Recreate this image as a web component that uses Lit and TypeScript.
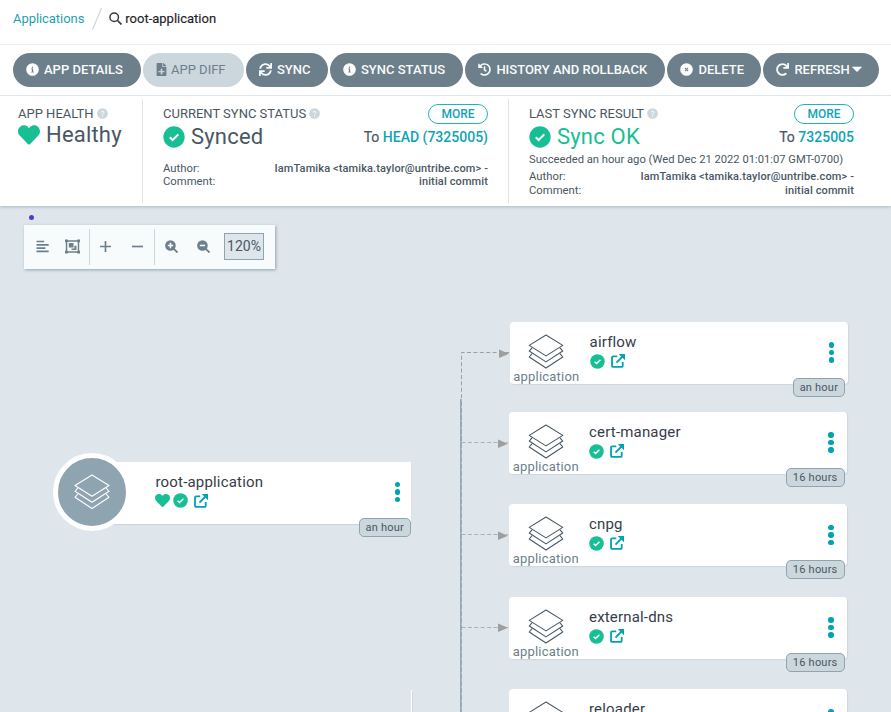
import { LitElement, html, css, svg, nothing } from "lit";
import { customElement, property } from "lit/decorators.js";
import { styleMap } from "lit/directives/style-map.js";

const circle = (fill = "currentColor") => svg`<circle cx="256" cy="256" r="248" fill=${fill}/>`;

const ICONS: Record<string, unknown> = {
  info: svg`${circle("#fff")}<g fill="#6d7f8b"><circle cx="254" cy="165" r="28"/><path d="M208 220h74v120h26v34H204v-34h28v-84h-24z"/></g>`,
  times: svg`${circle("#fff")}<path d="M192 192L320 320M320 192L192 320" stroke="#6d7f8b" stroke-width="44"/>`,
  check: svg`${circle("#18be94")}<path d="M158 262l66 64 132-132" fill="none" stroke="#fff" stroke-width="46"/>`,
  help: svg`${circle("#ccd6dd")}<path d="M190 210c0-90 136-84 132-6 0 50-64 48-64 96" fill="none" stroke="#fff" stroke-width="46"/><circle cx="258" cy="368" r="32" fill="#fff"/>`,
  heart: svg`<path fill="#18be94" d="M462.3 62.6C407.5 15.9 326 24.3 275.7 76.2L256 96.5l-19.7-20.3C186.1 24.3 104.5 15.9 49.7 62.6c-62.8 53.6-66.1 149.8-9.9 207.9l193.5 199.8c12.5 12.9 32.8 12.9 45.3 0l193.5-199.8c56.3-58.1 53-154.3-9.8-207.9z"/>`,
  diff: svg`<path fill="currentColor" d="M288 136V0H88C75 0 64 11 64 24v464c0 13 11 24 24 24h336c13 0 24-11 24-24V160H312c-13 0-24-11-24-24zm76 180c7 0 12 5 12 12v28c0 7-5 12-12 12h-76v76c0 7-5 12-12 12h-40c-7 0-12-5-12-12v-76h-76c-7 0-12-5-12-12v-28c0-7 5-12 12-12h76v-76c0-7 5-12 12-12h40c7 0 12 5 12 12v76zM441 105L343 7c-4-4-11-7-17-7h-6v128h128v-6c0-6-2-12-7-17z"/>`,
  sync: svg`<path fill="currentColor" d="M440.65 12.57l4 82.77A247.16 247.16 0 0 0 255.83 8C134.73 8 33.91 94.92 12.29 209.82A12 12 0 0 0 24.09 224h49.05a12 12 0 0 0 11.67-9.26 175.91 175.91 0 0 1 317-56.94l-101.46-4.86a12 12 0 0 0-12.57 12v47.41a12 12 0 0 0 12 12H500a12 12 0 0 0 12-12V12a12 12 0 0 0-12-12h-47.37a12 12 0 0 0-11.98 12.57zM255.83 432a175.61 175.61 0 0 1-146-77.8l101.8 4.87a12 12 0 0 0 12.57-12v-47.4a12 12 0 0 0-12-12H12a12 12 0 0 0-12 12V500a12 12 0 0 0 12 12h47.35a12 12 0 0 0 12-12.6l-4.15-82.57A247.17 247.17 0 0 0 255.83 504c121.11 0 221.93-86.92 243.55-201.82a12 12 0 0 0-11.8-14.18h-49.05a12 12 0 0 0-11.67 9.26A175.86 175.86 0 0 1 255.83 432z"/>`,
  redo: svg`<path fill="currentColor" d="M500.33 0h-47.41a12 12 0 0 0-12 12.57l4 82.76A247.42 247.42 0 0 0 256 8C119.34 8 7.9 119.53 8 256.19 8.1 393.07 119.1 504 256 504a247.1 247.1 0 0 0 166.18-63.91 12 12 0 0 0 .48-17.43l-34-34a12 12 0 0 0-16.38-.55A176 176 0 1 1 402.1 157.8l-101.53-4.87a12 12 0 0 0-12.57 12v47.41a12 12 0 0 0 12 12h200.33a12 12 0 0 0 12-12V12a12 12 0 0 0-12-12z"/>`,
  history: svg`<path fill="currentColor" d="M504 255.531c.253 136.64-111.18 248.372-247.82 248.468-59.015.042-113.223-20.53-155.822-54.911-11.077-8.94-11.905-25.541-1.839-35.607l11.267-11.267c8.609-8.609 22.353-9.551 31.891-1.984C173.062 425.135 212.781 440 256 440c101.705 0 184-82.311 184-184 0-101.705-82.311-184-184-184-48.814 0-93.149 18.969-126.068 49.932l50.754 50.754c10.08 10.08 2.941 27.314-11.313 27.314H24c-8.837 0-16-7.163-16-16V38.627c0-14.254 17.234-21.393 27.314-11.314l49.372 49.372C129.209 34.136 189.552 8 256 8c136.81 0 247.747 110.78 248 247.531zm-180.912 78.784l9.823-12.63c8.138-10.463 6.253-25.542-4.21-33.679L288 256.349V152c0-13.255-10.745-24-24-24h-16c-13.255 0-24 10.745-24 24v135.651l65.409 50.874c10.463 8.137 25.541 6.253 33.679-4.21z"/>`,
  search: svg`<g fill="none" stroke="currentColor" stroke-width="58"><circle cx="205" cy="205" r="168"/><path d="M325 325L490 490" stroke-width="68"/></g>`,
  caret: svg`<path fill="currentColor" d="M16 150h480L256 400z" stroke="currentColor" stroke-width="26" stroke-linejoin="round"/>`,
  external: svg`<path d="M230 84H76q-38 0-38 38v314q0 38 38 38h314q38 0 38-38V290" fill="none" stroke="#00a2b3" stroke-width="66"/><path d="M200 312L430 82" stroke="#00a2b3" stroke-width="66"/><path d="M280 0h232v232z" fill="#00a2b3"/>`,
  lines: svg`<path d="M20 60h300M20 190h480M20 320h350M20 450h480" stroke="currentColor" stroke-width="66"/>`,
  group: svg`<g fill="none" stroke="currentColor" stroke-width="50"><path d="M52 70h408v372H52z"/></g><path fill="currentColor" d="M0 18h96v96H0zM416 18h96v96h-96zM0 398h96v96H0zM416 398h96v96h-96zM130 140h160v150H130zM320 230h70v146H222v-56h98z"/>`,
  plus: svg`<path d="M256 40v432M40 256h432" stroke="currentColor" stroke-width="66"/>`,
  minus: svg`<path d="M40 256h432" stroke="currentColor" stroke-width="66"/>`,
  zoomin: svg`<path d="M310 310L495 495" stroke="currentColor" stroke-width="72"/><circle cx="215" cy="215" r="208" fill="currentColor"/><path d="M215 110v210M110 215h210" stroke="#f8fbfc" stroke-width="62"/>`,
  zoomout: svg`<path d="M310 310L495 495" stroke="currentColor" stroke-width="72"/><circle cx="215" cy="215" r="208" fill="currentColor"/><path d="M110 215h210" stroke="#f8fbfc" stroke-width="62"/>`,
};

const icon = (name: string, size: number) =>
  html`<svg class="icon" width=${size} height=${size} viewBox="0 0 512 512">${ICONS[name]}</svg>`;

const layers = (cls: string) => html`
  <svg class=${cls} width="36" height="36" viewBox="0 0 36 36" fill="none" stroke="currentColor" stroke-width="1.1" stroke-linejoin="round">
    <path d="M18 1L35 11.500 18 22.200 1 11.500z"/>
    <path d="M3.800 14L1 17.300 18 28.300 35 17.300 32.200 14"/>
    <path d="M3.800 20L1 23.300 18 34.500 35 23.300 32.200 20"/>
  </svg>`;

@customElement("resource-node")
export class ResourceNode extends LitElement {
  @property() name = "";
  @property() age = "";
  @property({ type: Boolean, reflect: true }) root = false;

  static styles = css`
    :host { position: absolute; display: block; width: 338px; height: 62px; background: #fff; border-radius: 4px; box-shadow: 1px 1px 1px #ccd6dd; }
    :host([root]) { width: 320px; border-radius: 0; box-shadow: 0 1px 1px #ccd6dd; }
    .body { display: grid; grid-template-columns: 80px 1fr 12px; grid-template-rows: 62px; height: 62px; padding-right: 10px; box-sizing: border-box; }
    :host([root]) .body { grid-template-columns: 64.5px 1fr 12px; padding-right: 7.5px; }
    .icon { display: block; }
    .kind { display: flex; flex-direction: column; align-items: center; width: 73.5px; padding-top: 11.5px; box-sizing: border-box; font-size: 13px; line-height: 15px; letter-spacing: .2px; color: #6d7f8b; }
    .layers { color: #495763; }
    .disc { margin: -9px 0 0 -38.5px; width: 68px; height: 68px; border: 5px solid #fff; border-radius: 50%; background: #8fa4b1; color: #fff; display: flex; align-items: center; justify-content: center; }
    .name { padding-top: 11px; font-size: 15px; line-height: 18px; letter-spacing: .18px; color: #363c4a; }
    .badges { display: flex; align-items: center; gap: 6px; margin-top: 2px; height: 16px; }
    .badges .pair { display: flex; gap: 3px; }
    :host([root]) .pair { margin-left: -.5px; }
    .menu { display: flex; flex-direction: column; align-items: center; justify-content: center; gap: 2px; padding-bottom: 1px; }
    .menu i { width: 5.6px; height: 5.6px; border-radius: 50%; background: #00a2b3; }
    .age { position: absolute; right: 2.5px; bottom: -13px; height: 19px; padding: 0 6px; box-sizing: border-box; border: 1px solid #8fa4b1; border-radius: 5px; background: #ccd6dd; color: #495763; font-size: 11px; line-height: 17px; letter-spacing: .22px; white-space: nowrap; }
    :host([root]) .age { right: 0; }
  `;

  render() {
    return html`
      <div class="body">
        ${this.root
          ? html`<div class="disc">${layers("glyph")}</div>`
          : html`<div class="kind">${layers("layers")}<span>application</span></div>`}
        <div class="text">
          <div class="name">${this.name}</div>
          <div class="badges">
            <span class="pair">${this.root ? icon("heart", 15) : nothing}${icon("check", 15)}</span>${icon("external", 14)}
          </div>
        </div>
        <div class="menu"><i></i><i></i><i></i></div>
      </div>
      ${this.age ? html`<span class="age">${this.age}</span>` : nothing}
    `;
  }
}

const BUTTONS = [
  { icon: "info", label: "APP DETAILS", w: 128 },
  { icon: "diff", label: "APP DIFF", w: 101, off: true },
  { icon: "sync", label: "SYNC", w: 82 },
  { icon: "info", label: "SYNC STATUS", w: 133.4 },
  { icon: "history", label: "HISTORY AND ROLLBACK", w: 200 },
  { icon: "times", label: "DELETE", w: 94 },
  { icon: "redo", label: "REFRESH", w: 116, caret: true },
];

const NODES = [
  { name: "airflow", age: "an hour", x: 509.6, y: 322 },
  { name: "cert-manager", age: "16 hours", x: 509, y: 412 },
  { name: "cnpg", age: "16 hours", x: 509, y: 504.4 },
  { name: "external-dns", age: "16 hours", x: 509, y: 597 },
  { name: "reloader", age: "", x: 509, y: 689 },
];

const CANVAS_TOP = 206;

@customElement("app-root")
export class AppRoot extends LitElement {
  static styles = css`
    :host { display: flex; flex-direction: column; width: 891px; height: 712px; overflow: hidden; background: #fff; font-family: Roboto, sans-serif; color: #495763; }
    .icon { display: block; flex: none; }
    .crumbs { display: flex; align-items: center; height: 44px; padding: 0 13px 8px; box-sizing: border-box; font-size: 13px; color: #363c4a; }
    .crumbs a { color: #1f9fb4; letter-spacing: -.06px; }
    .slash { margin: 0 6.5px; }
    .crumbs b { font-weight: 400; color: #1d222b; margin-left: 3px; -webkit-text-stroke: .15px; }
    .actions { display: flex; gap: 2px; height: 52px; padding: 8px 12px 8px 13px; box-sizing: border-box; border-top: 1px solid #eaeff3; border-bottom: 1px solid #e8edf1; }
    .btn { display: flex; flex: none; align-items: center; height: 34px; padding: 0 0 2px 13px; box-sizing: border-box; border-radius: 17px; background: #6d7f8b; color: #f8fbfc; font-size: 13px; font-weight: 500; white-space: nowrap; }
    .btn span { margin-left: 5px; }
    .btn span + .icon { margin-left: 2px; }
    .btn.off { background: #ccd6dd; color: #6d7f8b; font-weight: 400; }
    .btn.off .icon { margin-left: -1px; }
    .btn.off span { margin-left: 3px; }
    .status { position: relative; z-index: 1; display: flex; height: 110px; padding: 3px 0; box-sizing: border-box; background: #fff; box-shadow: 0 1px 3px #aab7c0; }
    .col { position: relative; width: 366px; padding: 8px 20px 0; box-sizing: border-box; border-right: 1px solid #dee6eb; }
    .col.health { width: 143px; padding-left: 18px; }
    .col.last { border-color: transparent; }
    .row { display: flex; align-items: center; justify-content: space-between; height: 14px; }
    .title { display: flex; align-items: center; gap: 3px; font-size: 13px; line-height: 14px; white-space: nowrap; }
    .title .icon { margin-bottom: 1px; }
    .more { height: 20px; width: 60px; box-sizing: border-box; border: 1px solid #1fb2c4; border-radius: 10px; color: #0fa3b5; font-size: 12px; font-weight: 500; line-height: 18px; text-align: center; }
    .big { display: flex; align-items: center; gap: 6px; font-size: 22px; line-height: 26px; letter-spacing: .2px; white-space: nowrap; }
    .health .big { margin-top: 1px; }
    .result { display: flex; align-items: flex-start; justify-content: space-between; margin-top: 3px; height: 26px; }
    .ok { color: #18be94; }
    .rev { font-size: 14px; line-height: 26px; white-space: nowrap; -webkit-text-stroke: .2px; }
    .rev b { font-weight: 500; color: #0fa3b5; -webkit-text-stroke: 0; }
    .when { margin-top: 2px; height: 16px; font-size: 11.2px; line-height: 16px; white-space: nowrap; }
    .meta { display: grid; grid-template-columns: 80px 1fr; font-size: 11.3px; line-height: 13px; }
    .meta p { margin: 0; text-align: right; font-size: 11px; font-weight: 500; letter-spacing: .12px; white-space: nowrap; justify-self: end; }
    .col:not(.last) .meta { margin-top: 12px; }
    .last .meta { line-height: 14px; margin-top: 2px; }
    .canvas { position: relative; flex: 1; background: #dee6eb; overflow: hidden; }
    .edges { position: absolute; inset: 0; }
    .dot { position: absolute; left: 29px; top: 9px; width: 5px; height: 5px; border-radius: 50%; background: #463fd6; }
    .tools { position: absolute; left: 24px; top: 19px; width: 251px; height: 44px; padding: 4px 11px 4px 0; box-sizing: border-box; display: flex; background: #f8fbfc; box-shadow: 1px 1px 3px #8fa4b1; color: #6d7f8b; }
    .tools .icon { margin-bottom: 2px; }
    .grp { display: flex; align-items: center; box-sizing: border-box; border-right: 1px solid #ccd6dd; }
    .a { width: 66px; padding-left: 12px; gap: 16px; }
    .b { width: 65px; padding-left: 9px; gap: 19px; }
    .c { flex: 1; padding-left: 10px; gap: 19px; border: 0; }
    .pct { margin: 0 0 1px -5px; width: 40px; height: 27px; box-sizing: border-box; border: 1px solid #8fa4b1; background: #dee6eb; color: #495763; font-size: 14px; line-height: 25px; text-align: center; }
    .sliver { position: absolute; left: 411px; top: 484px; width: 1px; height: 30px; background: #fff; box-shadow: 1px 1px 1px #ccd6dd; }
  `;

  private author() {
    return html`<div class="meta">
      <span>Author:</span><p>IamTamika &lt;tamika.taylor@untribe.com&gt; -</p>
      <span>Comment:</span><p>initial commit</p>
    </div>`;
  }

  render() {
    return html`
      <nav class="crumbs">
        <a>Applications</a>
        <svg class="slash" width="12" height="24" viewBox="0 0 12 24"><path d="M1.500 23.500L10.500 2" stroke="#ccd6dd" stroke-width="1.200"/></svg>
        ${icon("search", 13)}<b>root-application</b>
      </nav>
      <div class="actions">
        ${BUTTONS.map(
          (b) => html`<div class="btn ${b.off ? "off" : ""}" style=${styleMap({ width: `${b.w}px` })}>
            ${icon(b.icon, 13)}<span>${b.label}</span>${b.caret ? icon("caret", 10) : nothing}
          </div>`
        )}
      </div>
      <section class="status">
        <div class="col health">
          <div class="row"><span class="title">APP HEALTH ${icon("help", 11)}</span></div>
          <div class="big">${icon("heart", 22)}<span>Healthy</span></div>
        </div>
        <div class="col">
          <div class="row"><span class="title">CURRENT SYNC STATUS ${icon("help", 11)}</span><span class="more">MORE</span></div>
          <div class="result"><div class="big">${icon("check", 22)}<span>Synced</span></div><span class="rev">To <b>HEAD (7325005)</b></span></div>
          ${this.author()}
        </div>
        <div class="col last">
          <div class="row"><span class="title">LAST SYNC RESULT ${icon("help", 11)}</span><span class="more">MORE</span></div>
          <div class="result"><div class="big ok">${icon("check", 22)}<span>Sync OK</span></div><span class="rev">To <b>7325005</b></span></div>
          <div class="when">Succeeded an hour ago (Wed Dec 21 2022 01:01:07 GMT-0700)</div>
          ${this.author()}
        </div>
      </section>
      <main class="canvas">
        <svg class="edges" width="891" height="506" viewBox="0 206 891 506">
          <g fill="none" stroke="#8fa4b1" stroke-dasharray="4 2.400">
            <path d="M461.500 443V352.500H509"/>
            <path d="M461.500 442.500H508M461.500 534.500H508M461.500 627.500H508" stroke="#a3b4bf"/>
          </g>
          <path d="M461 399V713" stroke="#8fa4b1" stroke-width="1.800"/>
          <path d="M461.500 399V713" stroke="#b5c2cc" stroke-width="1" stroke-dasharray="2 5"/>
          <path fill="#9e9e9e" d="M499 349.500l10 4.300-10 4.200zM498 439.500l10 4.300-10 4.200zM498 531.500l10 4.300-10 4.200zM498 623.500l10 4.300-10 4.200z"/>
        </svg>
        <i class="dot"></i>
        <div class="tools">
          <div class="grp a">${icon("lines", 13)}${icon("group", 15)}</div>
          <div class="grp b">${icon("plus", 13)}${icon("minus", 13)}</div>
          <div class="grp c">${icon("zoomin", 13)}${icon("zoomout", 13)}<span class="pct">120%</span></div>
        </div>
        <resource-node root name="root-application" age="an hour" style=${styleMap({ left: "91px", top: `${461.5 - CANVAS_TOP}px` })}></resource-node>
        ${NODES.map(
          (n) => html`<resource-node name=${n.name} age=${n.age} style=${styleMap({ left: `${n.x}px`, top: `${n.y - CANVAS_TOP}px` })}></resource-node>`
        )}
        <i class="sliver"></i>
      </main>
    `;
  }
}
